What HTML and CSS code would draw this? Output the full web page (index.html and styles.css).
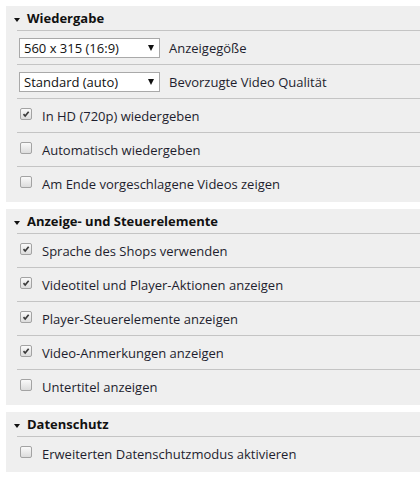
FILE: index.html
```html
<!DOCTYPE html>
<html lang="de">
<head>
<meta charset="utf-8">
<link rel="stylesheet" href="styles.css">
</head>
<body>
<div class="wrap">
  <section class="panel">
    <div class="head"><span class="caret"></span><span>Wiedergabe</span></div>
    <div class="row">
      <div class="select"><span>560 x 315 (16:9)</span><span class="arrow"></span></div>
      <span class="label">Anzeigegöße</span>
    </div>
    <div class="row">
      <div class="select"><span>Standard (auto)</span><span class="arrow"></span></div>
      <span class="label">Bevorzugte Video Qualität</span>
    </div>
    <div class="row"><span class="cb on"><svg viewBox="0 0 12 12"><path d="M3 6.2 L5 8.4 L9.2 3.2"/></svg></span><span>In HD (720p) wiedergeben</span></div>
    <div class="row"><span class="cb"></span><span>Automatisch wiedergeben</span></div>
    <div class="row last"><span class="cb"></span><span>Am Ende vorgeschlagene Videos zeigen</span></div>
  </section>
  <section class="panel">
    <div class="head"><span class="caret"></span><span>Anzeige- und Steuerelemente</span></div>
    <div class="row"><span class="cb on"><svg viewBox="0 0 12 12"><path d="M3 6.2 L5 8.4 L9.2 3.2"/></svg></span><span>Sprache des Shops verwenden</span></div>
    <div class="row"><span class="cb on"><svg viewBox="0 0 12 12"><path d="M3 6.2 L5 8.4 L9.2 3.2"/></svg></span><span>Videotitel und Player-Aktionen anzeigen</span></div>
    <div class="row"><span class="cb on"><svg viewBox="0 0 12 12"><path d="M3 6.2 L5 8.4 L9.2 3.2"/></svg></span><span>Player-Steuerelemente anzeigen</span></div>
    <div class="row"><span class="cb on"><svg viewBox="0 0 12 12"><path d="M3 6.2 L5 8.4 L9.2 3.2"/></svg></span><span>Video-Anmerkungen anzeigen</span></div>
    <div class="row last"><span class="cb"></span><span>Untertitel anzeigen</span></div>
  </section>
  <section class="panel">
    <div class="head"><span class="caret"></span><span>Datenschutz</span></div>
    <div class="row last"><span class="cb"></span><span>Erweiterten Datenschutzmodus aktivieren</span></div>
  </section>
</div>
</body>
</html>
```
FILE: styles.css
```css
html, body {
  margin: 0;
  padding: 0;
  background: #fff;
}
body {
  font-family: "Open Sans", "DejaVu Sans", sans-serif;
  font-size: 13px;
  color: #1e1e2e;
}
.wrap {
  padding: 6px 0 0 6px;
  display: flex;
  flex-direction: column;
  gap: 7px;
}
.panel {
  background: #efefef;
  padding: 0 0 2px 11px;
}
.head {
  height: 24px;
  border-bottom: 1px solid #c4c4c4;
  display: flex;
  align-items: center;
  font-weight: bold;
  font-size: 13px;
  color: #111;
}
.caret {
  width: 0;
  height: 0;
  margin: 3px 7px 0 -3px;
  border-left: 3.5px solid transparent;
  border-right: 3.5px solid transparent;
  border-top: 4px solid #111;
}
.row {
  height: 33px;
  border-bottom: 1px solid #c4c4c4;
  display: flex;
  align-items: center;
  padding-left: 2px;
}
.row.last {
  border-bottom: none;
}
.select {
  width: 141px;
  height: 20px;
  box-sizing: border-box;
  border: 1px solid #a9a9a9;
  background: #fff;
  display: flex;
  align-items: center;
  justify-content: space-between;
  padding: 0 4px 0 4px;
  margin-right: 9px;
  color: #111;
}
.arrow {
  width: 0;
  height: 0;
  border-left: 3px solid transparent;
  border-right: 3px solid transparent;
  border-top: 6px solid #111;
  margin-right: 1px;
}
.cb {
  width: 12px;
  height: 12px;
  box-sizing: border-box;
  border: 1px solid #a3a3a3;
  border-radius: 2px;
  background: linear-gradient(#fafafa, #dcdcdc);
  margin: -4px 10px 0 1px;
  display: inline-flex;
  flex: none;
}
.cb svg {
  width: 10px;
  height: 10px;
  fill: none;
  stroke: #3a3a3a;
  stroke-width: 2;
}
```
